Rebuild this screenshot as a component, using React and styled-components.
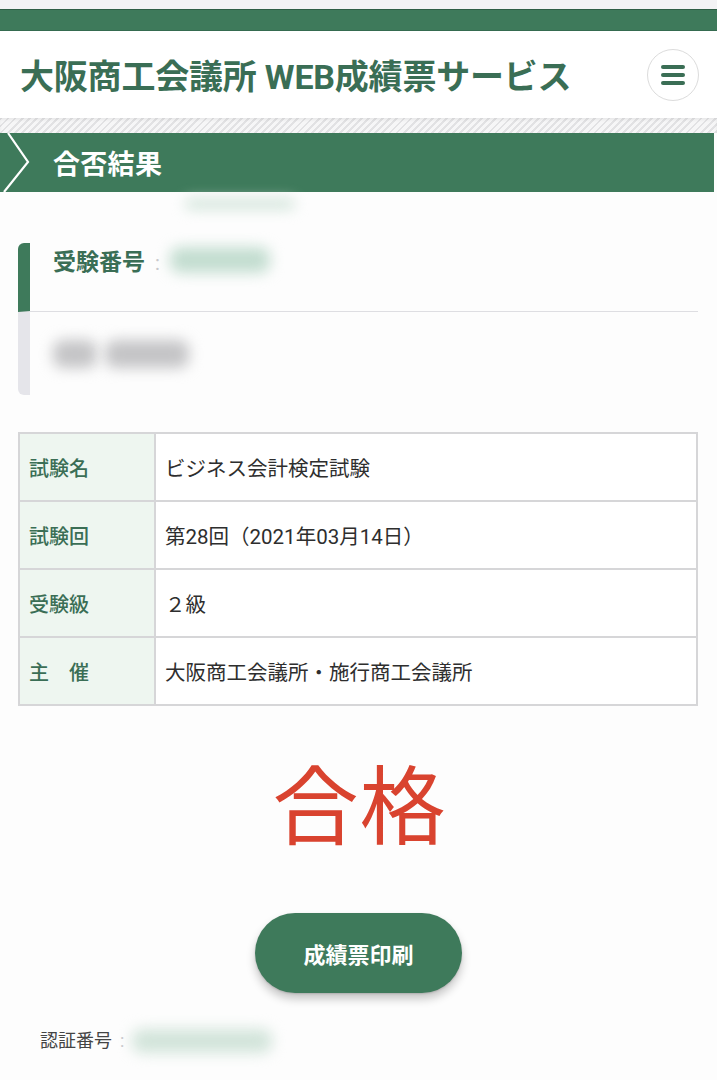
import React from "react";
import styled, { createGlobalStyle } from "styled-components";

const GREEN = "#3e7a5b";
const FONT = `Roboto, "Noto Sans CJK JP", sans-serif`;

const Global = createGlobalStyle`
  html, body { margin: 0; padding: 0; background: #fdfdfd; }
  body { font-family: ${FONT}; }
  * { box-sizing: border-box; }
`;

const Page = styled.div`
  width: 717px;
  min-height: 1080px;
  background: #fdfdfd;
  overflow: hidden;
`;

const TopGap = styled.div`
  height: 9px;
  background: #f3f3f5;
`;

const TopBand = styled.div`
  height: 22px;
  background: ${GREEN};
  border-top: 1px solid #2f5e46;
  border-bottom: 1px solid #356b50;
`;

const Header = styled.header`
  height: 87px;
  background: #fff;
  display: flex;
  align-items: center;
  justify-content: space-between;
  padding: 0 20px 0 20px;
`;

const SiteTitle = styled.h1`
  margin: 0;
  font-size: 34px;
  font-weight: 700;
  color: #3a6e55;
  letter-spacing: -0.2px;
  white-space: nowrap;
`;

const MenuButton = styled.button`
  width: 52px;
  height: 52px;
  border-radius: 50%;
  border: 1.5px solid #dcdcdc;
  background: #fff;
  display: flex;
  flex-direction: column;
  align-items: center;
  justify-content: center;
  gap: 4px;
  padding: 0;
  margin-right: -2px;
`;

const MenuLine = styled.span`
  display: block;
  width: 24px;
  height: 4px;
  border-radius: 2px;
  background: #3a6e55;
`;

const Stripes = styled.div`
  height: 15px;
  background: repeating-linear-gradient(
    135deg,
    #e2e2e4 0px,
    #e2e2e4 2px,
    #f6f6f7 2px,
    #f6f6f7 5px
  );
  box-shadow: inset 0 2px 3px rgba(0, 0, 0, 0.06);
`;

const SectionBar = styled.div`
  height: 59px;
  width: 714px;
  background: ${GREEN};
  display: flex;
  align-items: center;
  position: relative;
  padding-left: 53px;
`;

const Chevron = styled.svg`
  position: absolute;
  left: 0;
  top: 0;
`;

const SectionTitle = styled.h2`
  margin: 0;
  font-size: 27px;
  font-weight: 700;
  color: #fff;
  letter-spacing: 0.3px;
`;

const Blur = styled.span`
  display: inline-block;
  filter: blur(7px);
  background: ${(p) => p.$bg || "transparent"};
  border-radius: 10px;
  width: ${(p) => p.$w}px;
  height: ${(p) => p.$h}px;
`;

const FaintBlur = styled.div`
  height: 51px;
  padding-left: 185px;
  padding-top: 2px;
`;

const InfoCard = styled.section`
  margin: 0 19px 0 18px;
  display: flex;
  flex-direction: column;
`;

const InfoRow = styled.div`
  display: flex;
  align-items: ${(p) => (p.$accent ? "flex-start" : "center")};
  border-left: 12px solid ${(p) => (p.$accent ? GREEN : "#e5e5ea")};
  border-top-left-radius: ${(p) => (p.$accent ? "6px" : "0")};
  border-bottom-left-radius: ${(p) => (p.$accent ? "0" : "6px")};
  height: ${(p) => p.$h}px;
  padding-left: 23px;
  padding-top: ${(p) => (p.$accent ? "4px" : "0")};
  border-bottom: ${(p) => (p.$divider ? "1.5px solid #dedee2" : "none")};
  gap: 8px;
`;

const InfoLabel = styled.span`
  font-size: 23px;
  line-height: 32px;
  font-weight: 700;
  color: #3a6e55;
`;

const Colon = styled.span`
  font-size: ${(p) => p.$size || 18}px;
  line-height: ${(p) => (p.$size ? 32 : 24)}px;
  color: #c8c8cc;
  margin: 0 2px;
`;

const ResultTable = styled.table`
  margin: 37px 19px 0 18px;
  width: 680px;
  border-collapse: collapse;
  border: 2px solid #d6d6d8;
`;

const Row = styled.tr`
  height: 68px;
  border-bottom: 2px solid #d6d6d8;
`;

const HeadCell = styled.th`
  width: 136px;
  background: #eef6f0;
  border-right: 2px solid #d6d6d8;
  text-align: left;
  padding: 0 0 0 9px;
  font-size: 20px;
  font-weight: 500;
  color: #3a6e55;
  white-space: pre;
`;

const ValueCell = styled.td`
  background: #fff;
  padding: 0 0 0 9px;
  font-size: 20.5px;
  color: #2e2e2e;
`;

const Verdict = styled.div`
  margin-top: 60px;
  text-align: center;
  font-size: 86px;
  line-height: 1;
  color: #d9432f;
  font-weight: 400;
  letter-spacing: 1px;
  padding-left: 2px;
`;

const ButtonWrap = styled.div`
  display: flex;
  justify-content: center;
  margin-top: 61px;
`;

const PrintButton = styled.button`
  width: 207px;
  height: 80px;
  border-radius: 40px;
  border: none;
  background: ${GREEN};
  color: #fff;
  font-family: ${FONT};
  font-size: 22px;
  font-weight: 700;
  box-shadow: 0 6px 10px rgba(0, 0, 0, 0.22), 0 1px 2px rgba(0, 0, 0, 0.15);
`;

const Footer = styled.div`
  margin-top: 36px;
  padding-left: 40px;
  display: flex;
  align-items: center;
  gap: 6px;
`;

const FooterLabel = styled.span`
  font-size: 18px;
  line-height: 24px;
  color: #444;
`;

const rows = [
  ["試験名", "ビジネス会計検定試験"],
  ["試験回", "第28回（2021年03月14日）"],
  ["受験級", "２級"],
  ["主　催", "大阪商工会議所・施行商工会議所"],
];

export default function App() {
  return (
    <Page>
      <Global />
      <TopGap />
      <TopBand />
      <Header>
        <SiteTitle>大阪商工会議所 WEB成績票サービス</SiteTitle>
        <MenuButton aria-label="menu">
          <MenuLine />
          <MenuLine />
          <MenuLine />
        </MenuButton>
      </Header>
      <Stripes />
      <SectionBar>
        <Chevron width="34" height="59" viewBox="0 0 34 59">
          <polyline
            points="8,0 28,29 4,59"
            fill="none"
            stroke="#fff"
            strokeWidth="2.2"
          />
        </Chevron>
        <SectionTitle>合否結果</SectionTitle>
      </SectionBar>
      <FaintBlur>
        <Blur $w={110} $h={10} $bg="#cfe3d8" />
      </FaintBlur>
      <InfoCard>
        <InfoRow $accent $divider $h={69}>
          <InfoLabel>受験番号</InfoLabel>
          <Colon $size={20}>:</Colon>
          <Blur $w={100} $h={26} $bg="#c3ddd0" />
        </InfoRow>
        <InfoRow $h={83}>
          <Blur $w={44} $h={28} $bg="#c4c4c6" />
          <Blur $w={84} $h={28} $bg="#c4c4c6" />
        </InfoRow>
      </InfoCard>
      <ResultTable>
        <tbody>
          {rows.map(([k, v]) => (
            <Row key={k}>
              <HeadCell>{k}</HeadCell>
              <ValueCell>{v}</ValueCell>
            </Row>
          ))}
        </tbody>
      </ResultTable>
      <Verdict>合格</Verdict>
      <ButtonWrap>
        <PrintButton>成績票印刷</PrintButton>
      </ButtonWrap>
      <Footer>
        <FooterLabel>認証番号</FooterLabel>
        <Colon>:</Colon>
        <Blur $w={140} $h={24} $bg="#d2e4da" />
      </Footer>
    </Page>
  );
}
